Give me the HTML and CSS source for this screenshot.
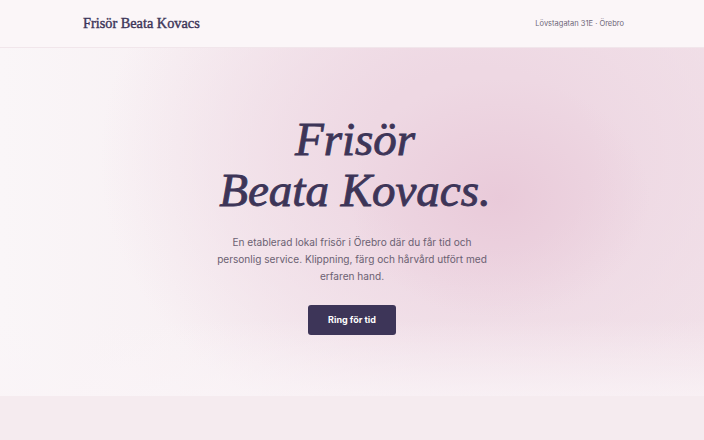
FILE: index.html
```html
<!DOCTYPE html>
<html lang="sv">
<head>
  <meta charset="UTF-8">
  <title>Frisör Beata Kovacs</title>
  <link rel="stylesheet" href="styles.css">
</head>
<body>
  <header class="site-header">
    <div class="container header-inner">
      <a class="logo" href="#">Frisör Beata Kovacs</a>
      <span class="address">Lövstagatan 31E · Örebro</span>
    </div>
  </header>

  <section class="hero">
    <div class="hero-content">
      <h1>Frisör<br>Beata Kovacs.</h1>
      <p>En etablerad lokal frisör i Örebro där du får tid och personlig service. Klippning, färg och hårvård utfört med erfaren hand.</p>
      <a class="btn" href="tel:">Ring för tid</a>
    </div>
  </section>

  <section class="next"></section>
</body>
</html>
```

FILE: styles.css
```css
body {
  margin: 0;
  background: #f5ebef;
  color: #3d3558;
  font-family: 'Inter', 'Noto Sans', sans-serif;
}

.container {
  max-width: 544px;
  margin: 0 auto;
  padding: 0 80px;
}

.site-header {
  height: 48px;
  background: #fbf6f8;
  border-bottom: 1px solid #f1e6eb;
  box-sizing: border-box;
}

.header-inner {
  height: 100%;
  display: flex;
  align-items: center;
  justify-content: space-between;
}

.logo {
  font-family: 'Liberation Serif', serif;
  font-weight: 400;
  font-size: 14.3px;
  -webkit-text-stroke: 0.4px #3d3558;
  color: #3d3558;
  text-decoration: none;
  margin-left: 3px;
}

.address {
  font-size: 7.5px;
  color: #6f6878;
}

/* soft pink glow, fading out to the left and bottom */
.hero {
  height: 348px;
  background:
    linear-gradient(to top, rgba(250, 244, 247, 0.75) 0%, rgba(250, 244, 247, 0) 22%),
    radial-gradient(ellipse 150px 120px at 500px 150px, rgba(231, 196, 213, 0.7), rgba(231, 196, 213, 0)),
    radial-gradient(ellipse 380px 300px at 480px 110px, rgba(238, 216, 227, 1) 30%, rgba(238, 216, 227, 0) 100%),
    linear-gradient(to right, #faf6f8 0%, #f8f1f4 25%, #f4e8ee 60%, #f2e3ea 100%);
  display: flex;
  justify-content: center;
}

.hero-content {
  text-align: center;
  padding-top: 66px;
  width: 277px;
}

.hero h1 {
  font-family: 'Liberation Serif', serif;
  font-style: italic;
  font-weight: 400;
  font-size: 47px;
  line-height: 51px;
  -webkit-text-stroke: 0.9px #3d3558;
  margin: 0 -68px 18px -62px;
  color: #3d3558;
  white-space: nowrap;
}

.hero p {
  font-size: 10.1px;
  line-height: 17px;
  color: #6b6172;
  margin: 0 0 20px;
}

.btn {
  display: inline-block;
  width: 88px;
  height: 30px;
  line-height: 30px;
  background: #3d3558;
  color: #fff;
  border-radius: 3px;
  font-size: 9px;
  font-weight: 700;
  text-decoration: none;
}

.next {
  height: 44px;
}
```
